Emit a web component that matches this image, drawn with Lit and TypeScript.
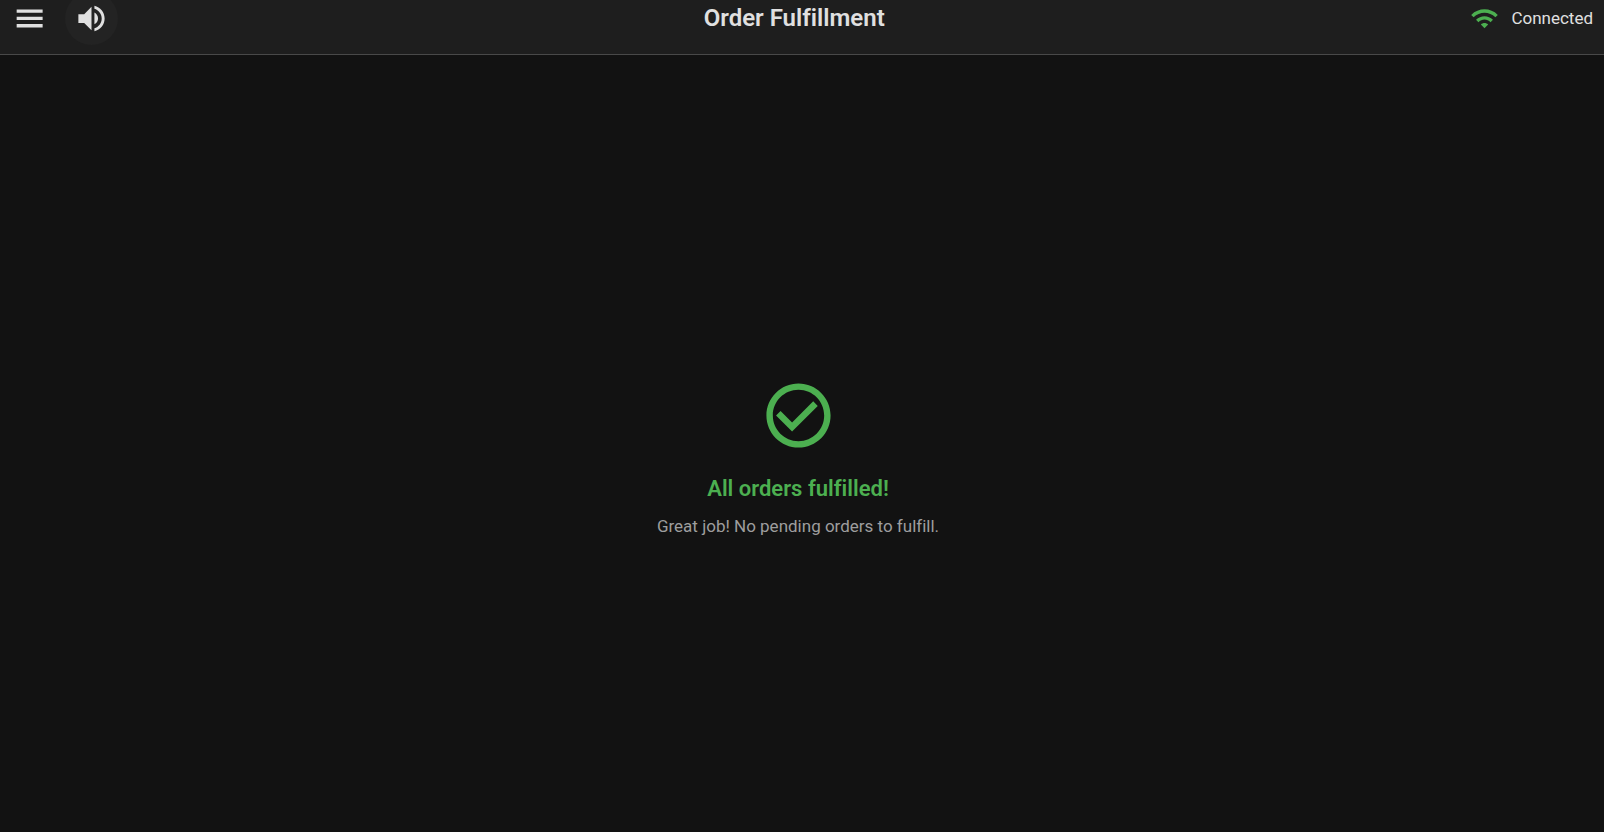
import { LitElement, html, css } from "lit";
import { customElement, state } from "lit/decorators.js";

@customElement("app-root")
export class AppRoot extends LitElement {
  @state() private muted = false;

  static styles = css`
    :host {
      display: flex;
      flex-direction: column;
      min-height: 100vh;
      overflow: hidden;
      background: #121212;
      color: #e0e0e0;
      font-family: Roboto, "Liberation Sans", sans-serif;
      font-variant-ligatures: none;
    }
    header {
      padding: 0 11px 18px 3px;
      background: #1e1e1e;
      border-bottom: 1px solid #494949;
    }
    .toolbar {
      display: flex;
      align-items: center;
      height: 36px;
    }
    .actions {
      display: flex;
      gap: 9px;
    }
    .icon-button {
      display: grid;
      place-items: center;
      width: 53px;
      height: 53px;
      padding: 0;
      border: 0;
      border-radius: 50%;
      background: none;
      color: inherit;
      cursor: pointer;
    }
    .filled {
      background: #232323;
    }
    svg {
      display: block;
      fill: currentColor;
    }
    .icon {
      width: 35px;
      height: 35px;
    }
    h1 {
      flex: 1;
      margin: 0;
      text-align: center;
      font-size: 24px;
      line-height: 32px;
      font-weight: 600;
    }
    .status {
      display: flex;
      align-items: center;
      gap: 12px;
      font-size: 17px;
      line-height: 24px;
    }
    .wifi {
      width: 29px;
      height: 29px;
      color: #4caf50;
    }
    main {
      flex: 1;
      display: flex;
      flex-direction: column;
      align-items: center;
      justify-content: center;
      padding: 28px 8px 0 0;
      text-align: center;
    }
    .check {
      width: 77px;
      height: 77px;
      color: #4caf50;
    }
    h2 {
      margin: 19px 0 9px;
      color: #4caf50;
      font-size: 22px;
      line-height: 32px;
      font-weight: 600;
    }
    p {
      margin: 0;
      color: #9e9e9e;
      font-size: 17px;
      line-height: 24px;
    }
  `;

  render() {
    return html`
      <header>
        <div class="toolbar">
          <div class="actions">
            <button class="icon-button" aria-label="Menu">
              <svg class="icon" viewBox="0 0 24 24" aria-hidden="true">
                <path
                  d="M3.2 5.8h17.8v2.3H3.2zM3.2 10.8h17.8v2.3H3.2zM3.2 15.8h17.8v2.3H3.2z"
                />
              </svg>
            </button>
            <button
              class="icon-button filled"
              aria-label="Sound"
              aria-pressed=${!this.muted}
              @click=${() => (this.muted = !this.muted)}
            >
              <svg class="icon" viewBox="0 0 24 24" aria-hidden="true">
                <path
                  d="M3 9v6h4l5 5V4L7 9H3zm13.5 3c0-1.77-1.02-3.29-2.5-4.03v8.05c1.48-.73 2.5-2.25 2.5-4.02zM14 3.23v2.06c2.89.86 5 3.54 5 6.71s-2.11 5.85-5 6.71v2.06c4.01-.91 7-4.49 7-8.77s-2.99-7.86-7-8.77z"
                />
              </svg>
            </button>
          </div>
          <h1>Order Fulfillment</h1>
          <div class="status" role="status">
            <svg class="wifi" viewBox="0 0 24 24" aria-hidden="true">
              <path
                d="M1 9l2 2c4.97-4.97 13.03-4.97 18 0l2-2C16.93 2.93 7.08 2.93 1 9zm8 8l3 3 3-3c-1.65-1.66-4.34-1.66-6 0zm-4-4l2 2c2.76-2.76 7.24-2.76 10 0l2-2C15.14 9.14 8.87 9.14 5 13z"
              />
            </svg>
            <span>Connected</span>
          </div>
        </div>
      </header>
      <main>
        <svg class="check" viewBox="0 0 24 24" aria-hidden="true">
          <path
            d="M16.59 7.58L10 14.17l-3.59-3.58L5 12l5 5 8-8-1.41-1.42zM12 2C6.48 2 2 6.48 2 12s4.48 10 10 10 10-4.48 10-10S17.52 2 12 2zm0 18c-4.42 0-8-3.58-8-8s3.58-8 8-8 8 3.58 8 8-3.58 8-8 8z"
          />
        </svg>
        <h2>All orders fulfilled!</h2>
        <p>Great job! No pending orders to fulfill.</p>
      </main>
    `;
  }
}
